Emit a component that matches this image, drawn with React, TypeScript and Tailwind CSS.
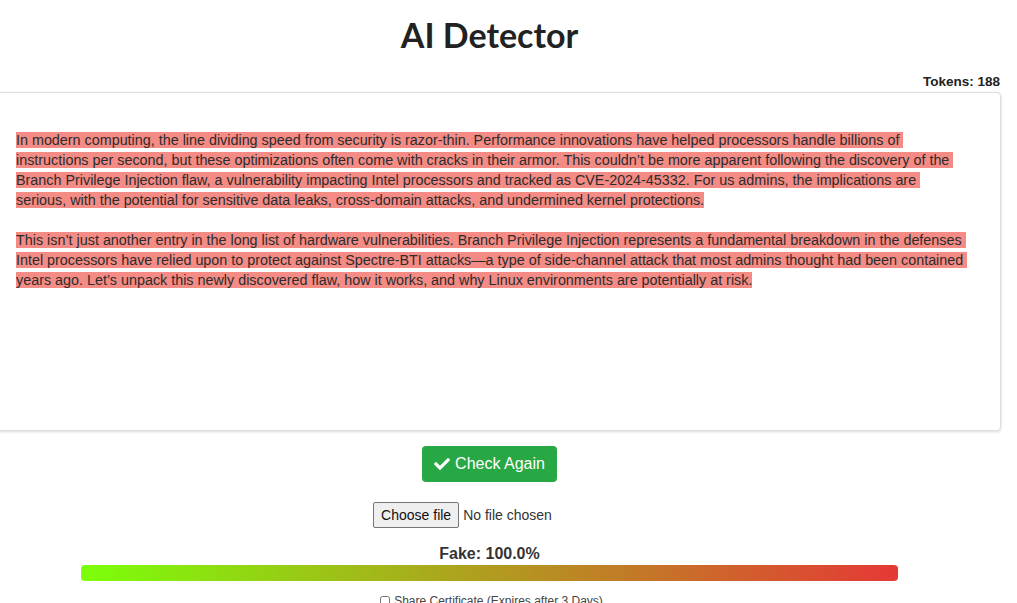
import { FaCheck } from "react-icons/fa";

const para1 =
  "In modern computing, the line dividing speed from security is razor-thin. Performance innovations have helped processors handle billions of instructions per second, but these optimizations often come with cracks in their armor. This couldn’t be more apparent following the discovery of the Branch Privilege Injection flaw, a vulnerability impacting Intel processors and tracked as CVE-2024-45332. For us admins, the implications are serious, with the potential for sensitive data leaks, cross-domain attacks, and undermined kernel protections.";
const para2 =
  "This isn’t just another entry in the long list of hardware vulnerabilities. Branch Privilege Injection represents a fundamental breakdown in the defenses Intel processors have relied upon to protect against Spectre-BTI attacks—a type of side-channel attack that most admins thought had been contained years ago. Let’s unpack this newly discovered flaw, how it works, and why Linux environments are potentially at risk.";

export default function App() {
  return (
    <div className="w-[1017px] h-[603px] overflow-hidden bg-white font-['Liberation_Sans',Arial,sans-serif] text-[#333]">
      <h1 className="pt-[13px] w-[979px] text-center font-['Lato',sans-serif] font-bold text-[34px] leading-[44px] text-[#222]">
        AI Detector
      </h1>
      <div className="mt-[17px] w-[1000px] text-right text-[13.5px] font-bold leading-[16px] text-[#222]">
        Tokens: 188
      </div>
      <div className="mt-[2px] -ml-[10px] w-[1011px] h-[339px] border border-[#dcdcdc] rounded-[4px] shadow-[0_1px_3px_rgba(0,0,0,0.15)] pl-[25px] pt-[37px]">
        <div className="w-[948px] whitespace-pre-wrap text-[14.35px] leading-[20px] text-[#2d2d2d]">
          <span className="bg-[#f58b85]">{para1}</span>
          {"\n\n"}
          <span className="bg-[#f58b85]">{para2}</span>
        </div>
      </div>
      <div className="w-[979px] flex flex-col items-center">
        <button className="mt-[15px] h-[36px] px-[12px] flex items-center gap-[5px] rounded-[4px] bg-[#28a745] text-white text-[16px]">
          <FaCheck className="size-[16px]" />
          Check Again
        </button>
        <label className="mt-[20px] mr-[54px] flex items-center gap-[4px] text-[14px] text-[#333]">
          <input type="file" className="hidden" />
          <span className="h-[26px] px-[7px] flex items-center border border-[#767676] rounded-[2px] bg-[#efefef] text-[#111]">
            Choose file
          </span>
          <span>No file chosen</span>
        </label>
        <div className="mt-[16px] text-[16px] font-bold leading-[20px] text-[#333]">Fake: 100.0%</div>
        <div className="mt-[1px] w-[817px] h-[16px] rounded-[4px] bg-linear-to-r/srgb from-[#7cff0a] to-[#e53935]" />
        <label className="mt-[13px] ml-[4px] flex items-center gap-[4px] text-[12px] leading-[14px] text-[#444]">
          <input type="checkbox" className="size-[10px]" />
          Share Certificate (Expires after 3 Days)
        </label>
      </div>
    </div>
  );
}
